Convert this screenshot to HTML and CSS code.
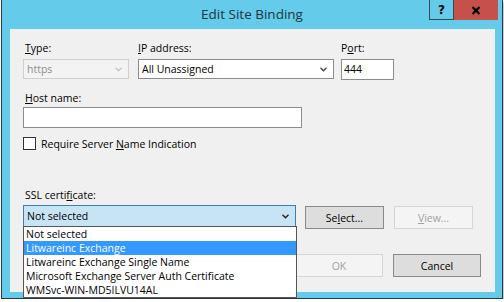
FILE: index.html
```html
<!DOCTYPE html>
<html lang="en">
<head>
    <meta charset="UTF-8">
    <title>Edit Site Binding</title>
    <link rel="stylesheet" href="styles.css">
</head>
<body>
    <div class="window">
        <div class="titlebar">
            <span class="title">Edit Site Binding</span>
            <div class="caption-btns">
                <span class="cap-help">?</span>
                <span class="cap-close">
                    <svg width="10" height="9" viewBox="0 0 10 9"><path d="M1.5 1 L8.5 8 M8.5 1 L1.5 8" stroke="#000" stroke-width="2.2" fill="none"/></svg>
                </span>
            </div>
        </div>

        <div class="content">
            <div class="row-binding">
                <div class="field f-type">
                    <label class="lbl"><u>T</u>ype:</label>
                    <div class="combo combo-disabled">
                        <span>https</span>
                        <svg class="chev" width="7" height="5" viewBox="0 0 7 5"><path d="M0.5 0.8 L3.5 3.8 L6.5 0.8" stroke="#c4c4c4" stroke-width="1.3" fill="none"/></svg>
                    </div>
                </div>
                <div class="field f-ip">
                    <label class="lbl lbl-ip"><u>I</u>P address:</label>
                    <div class="combo">
                        <span>All Unassigned</span>
                        <svg class="chev" width="7" height="5" viewBox="0 0 7 5"><path d="M0.5 0.8 L3.5 3.8 L6.5 0.8" stroke="#444" stroke-width="1.3" fill="none"/></svg>
                    </div>
                </div>
                <div class="field f-port">
                    <label class="lbl lbl-port">P<u>o</u>rt:</label>
                    <div class="textbox">444</div>
                </div>
            </div>

            <label class="lbl lbl-host"><u>H</u>ost name:</label>
            <div class="textbox host-box"></div>

            <div class="check-row">
                <span class="checkbox"></span>
                <span>Require Server <u>N</u>ame Indication</span>
            </div>

            <label class="lbl lbl-ssl">SSL certi<u>f</u>icate:</label>
            <div class="ssl-row">
                <div class="combo combo-open">
                    <span>Not selected</span>
                    <svg class="chev" width="7" height="5" viewBox="0 0 7 5"><path d="M0.5 0.8 L3.5 3.8 L6.5 0.8" stroke="#222" stroke-width="1.4" fill="none"/></svg>
                </div>
                <button class="btn btn-select">Se<u>l</u>ect...</button>
                <button class="btn btn-disabled btn-view"><u>V</u>iew...</button>
            </div>

            <div class="dialog-btns">
                <button class="btn btn-disabled btn-wide">OK</button>
                <button class="btn btn-wide">Cancel</button>
            </div>

            <ul class="drop-list">
                <li>Not selected</li>
                <li class="active">Litwareinc Exchange</li>
                <li>Litwareinc Exchange Single Name</li>
                <li>Microsoft Exchange Server Auth Certificate</li>
                <li>WMSvc-WIN-MD5ILVU14AL</li>
            </ul>
        </div>
    </div>
</body>
</html>
```

FILE: styles.css
```css
/* Base */
* {
    margin: 0;
    padding: 0;
    box-sizing: border-box;
}
body {
    background: #fff;
    font-family: "Open Sans", "Noto Sans", sans-serif;
    font-size: 10.5px;
    color: #000;
}
u {
    text-decoration: underline;
    text-underline-offset: 1px;
}

/* Window frame */
.window {
    width: 502px;
    height: 299px;
    margin-left: 1px;
    background: #64cbea;
    border: 1px solid #2c3a40;
    border-top: none;
    box-shadow: 1px 2px 2px rgba(0, 0, 0, 0.3);
    display: flex;
    flex-direction: column;
}
.titlebar {
    position: relative;
    height: 29px;
    display: flex;
    justify-content: center;
    align-items: center;
}
.title {
    font-size: 13.5px;
    color: #1d3640;
    margin-top: -1px;
}
.caption-btns {
    position: absolute;
    top: 0;
    right: 4px;
    display: flex;
}
.cap-help {
    width: 25px;
    height: 20px;
    border: 1px solid #3b4a50;
    border-top: none;
    display: flex;
    justify-content: center;
    align-items: center;
    font-weight: bold;
    font-size: 12px;
    font-family: "DejaVu Sans", sans-serif;
}
.cap-close {
    width: 44px;
    height: 20px;
    background: #c6514a;
    display: flex;
    justify-content: center;
    align-items: center;
}

/* Content panel */
.content {
    position: relative;
    margin-left: 8px;
    width: 485px;
    height: 263px;
    background: #f0f0f0;
    padding: 12px 14px 0 13px;
}
.lbl {
    display: block;
    height: 15px;
    line-height: 15px;
    padding-left: 2px;
}
.row-binding {
    display: flex;
    align-items: flex-start;
}
.field .lbl {
    margin-bottom: 3px;
}
.f-type {
    width: 106px;
}
.f-ip {
    width: 196px;
    margin-left: 9px;
}
.lbl-ip {
    padding-left: 0;
}
.f-port {
    width: 53px;
    margin-left: 7px;
}
.lbl-port {
    padding-left: 0;
}

.combo {
    height: 20px;
    display: flex;
    align-items: center;
    justify-content: space-between;
    padding: 0 6px 0 3px;
    background: #fff;
    border: 1px solid #8c8c8c;
}
.combo-disabled {
    background: #f3f3f3;
    border-color: #cfcfcf;
    color: #8e8e8e;
}
.textbox {
    height: 21px;
    line-height: 19px;
    padding-left: 2px;
    background: #fff;
    border: 1px solid #8c8c8c;
}
.lbl-host {
    margin-top: 11px;
    margin-bottom: 1px;
}
.host-box {
    width: 279px;
}

.check-row {
    margin-top: 9px;
    height: 13px;
    display: flex;
    align-items: center;
    gap: 5px;
}
.checkbox {
    width: 13px;
    height: 13px;
    background: #fff;
    border: 1px solid #333;
}

.lbl-ssl {
    margin-top: 38px;
    margin-bottom: 2px;
}
.ssl-row {
    display: flex;
    align-items: flex-start;
}
.combo-open {
    width: 273px;
    height: 22px;
    background: #c7e4f5;
    border-color: #3d7fb3;
}
.btn {
    height: 23px;
    font-family: inherit;
    font-size: 10.5px;
    color: #000;
    background: #dddddd;
    border: 1px solid #8a8a8a;
    margin-top: 1px;
}
.btn-select {
    width: 79px;
    margin-left: 9px;
}
.btn-view {
    width: 79px;
    margin-left: 10px;
}
.btn-disabled {
    background: #f4f4f4;
    border-color: #d6d6d6;
    color: #a2a2a2;
}
.dialog-btns {
    margin-top: 24px;
    display: flex;
    justify-content: flex-end;
    gap: 10px;
}
.btn-wide {
    width: 88px;
}

/* Open dropdown list, drawn over the dialog */
.drop-list {
    position: absolute;
    left: 13px;
    top: 197px;
    width: 274px;
    list-style: none;
    background: #fff;
    border: 1px solid #555;
    z-index: 2;
}
.drop-list li {
    height: 14px;
    line-height: 14px;
    padding-left: 2px;
    white-space: nowrap;
}
.drop-list li.active {
    background: #3399ff;
    color: #fff;
}
```
